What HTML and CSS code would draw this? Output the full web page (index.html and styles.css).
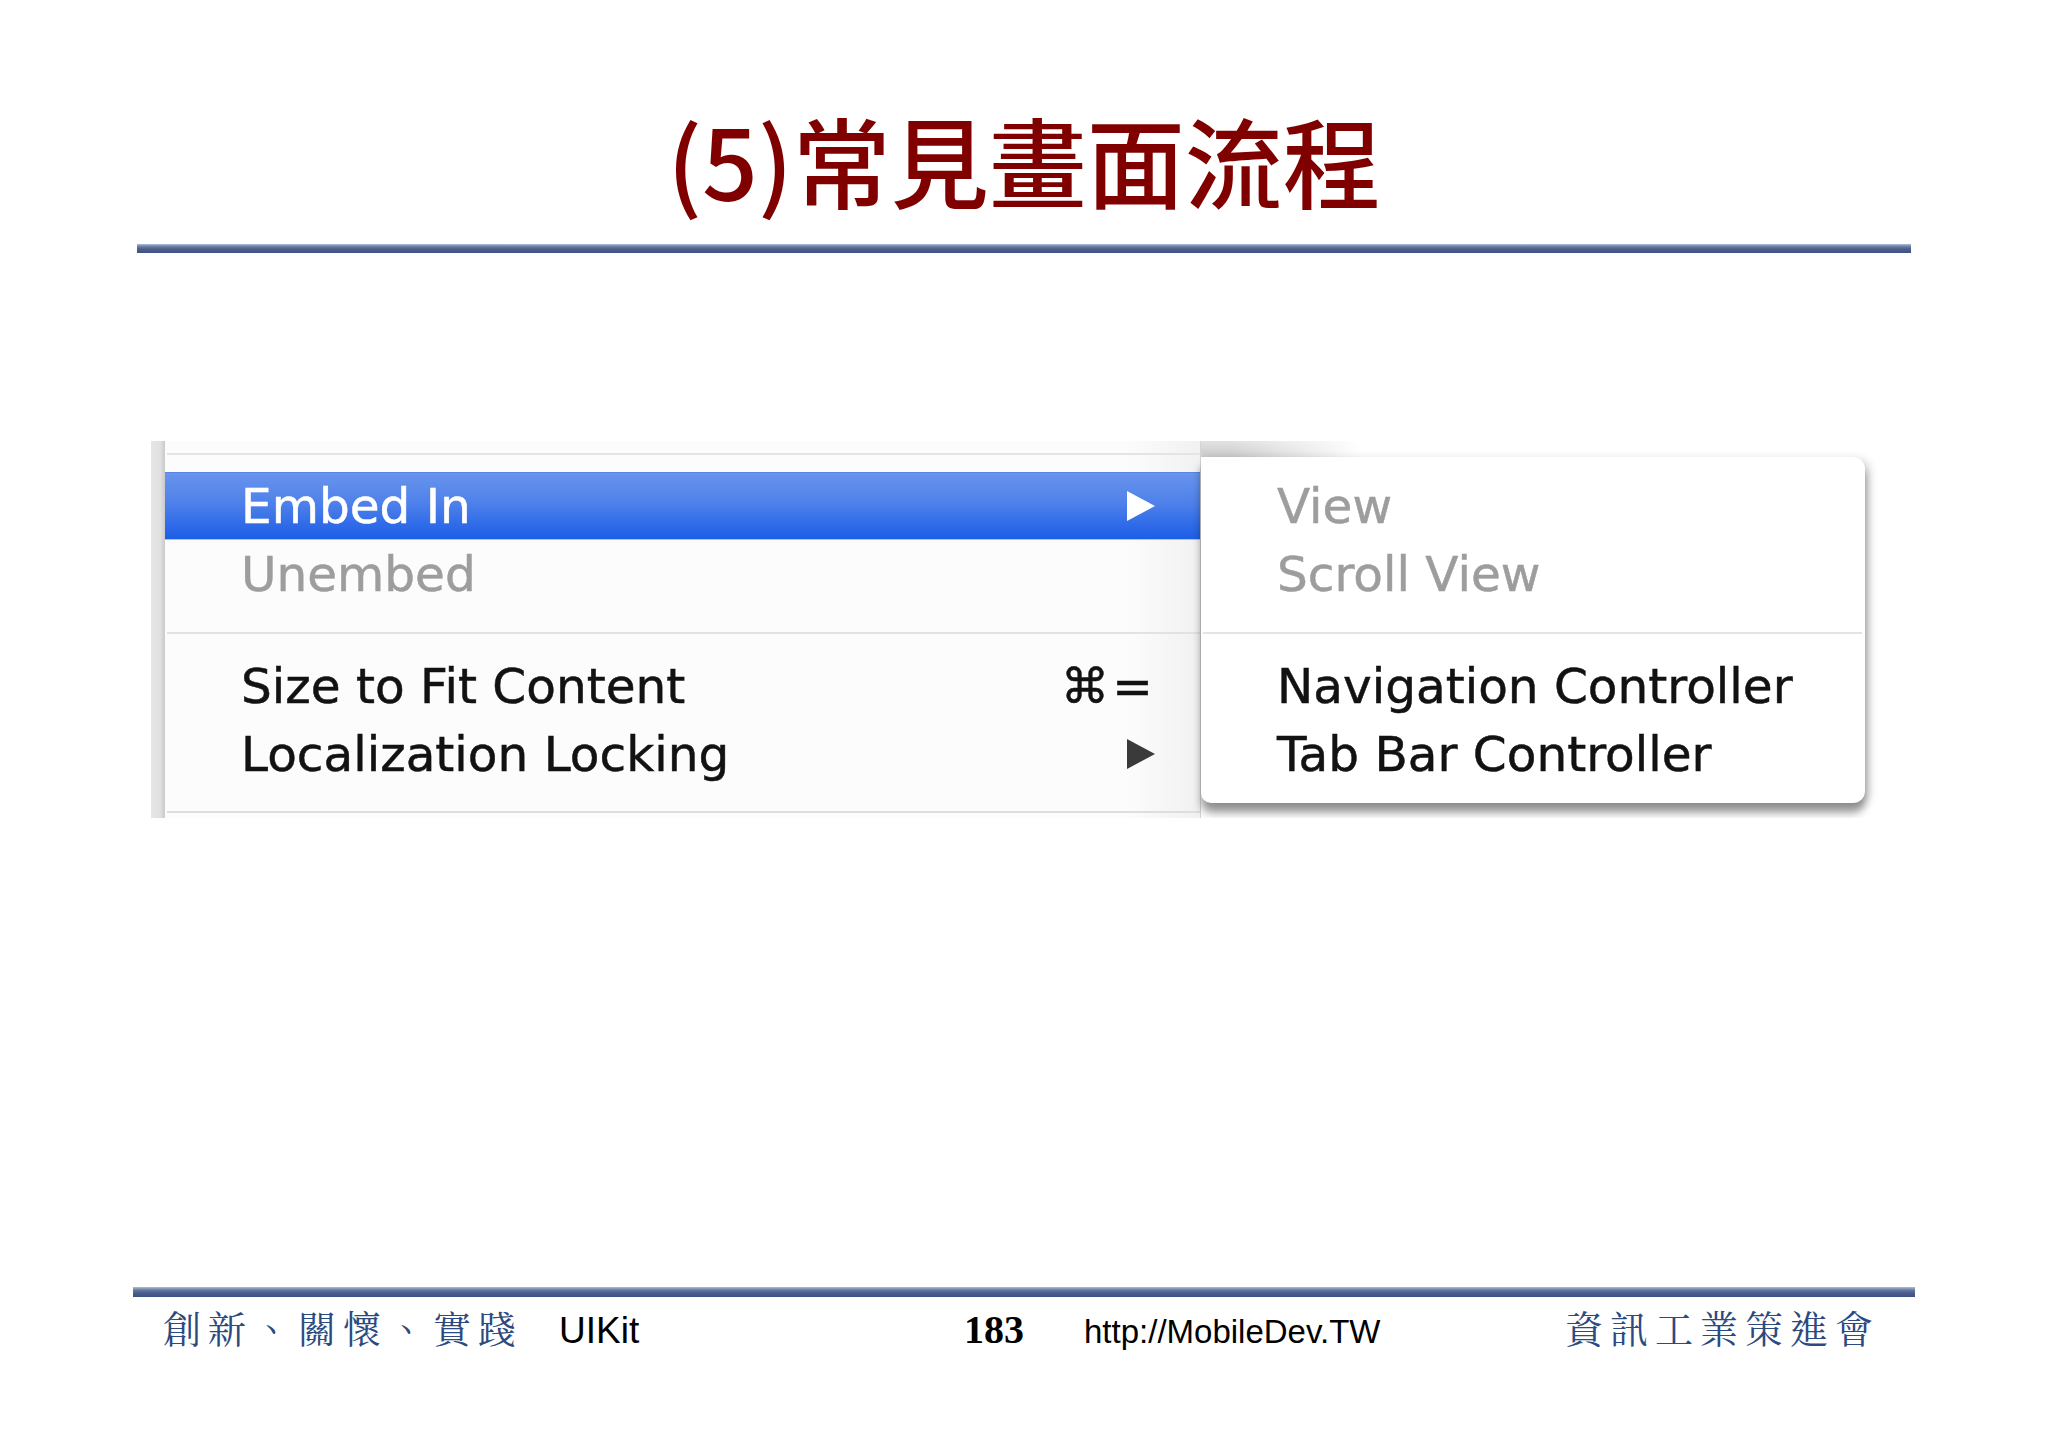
FILE: index.html
```html
<!DOCTYPE html>
<html lang="zh-Hant">
<head>
<meta charset="utf-8">
<title>(5)常見畫面流程</title>
<link rel="stylesheet" href="styles.css">
</head>
<body>
<div class="slide">
  <header class="title-area">
    <h1 class="title">(5)常見畫面流程</h1>
  </header>
  <div class="rule rule-top"></div>

  <div class="shot">
    <div class="shot-edge"></div>
    <div class="menu">
      <div class="menu-line"></div>
      <div class="menu-items">
        <div class="item item-selected">
          <span class="label">Embed In</span>
          <svg class="arrow" width="30" height="32" viewBox="0 0 30 32"><polygon points="1,1 29,16 1,31" fill="#ffffff"/></svg>
        </div>
        <div class="item item-disabled"><span class="label">Unembed</span></div>
        <div class="sep"><div class="sep-line"></div></div>
        <div class="item">
          <span class="label">Size to Fit Content</span>
          <span class="shortcut">⌘=</span>
        </div>
        <div class="item">
          <span class="label">Localization Locking</span>
          <svg class="arrow" width="30" height="32" viewBox="0 0 30 32"><polygon points="1,1 29,16 1,31" fill="#3a3a3a"/></svg>
        </div>
      </div>
      <div class="menu-line menu-line-bottom"></div>
    </div>
    <div class="subcol">
      <div class="subcol-top"></div>
      <div class="submenu">
        <div class="item sub-item item-disabled"><span class="label">View</span></div>
        <div class="item sub-item item-disabled"><span class="label">Scroll View</span></div>
        <div class="sep sub-sep"><div class="sep-line"></div></div>
        <div class="item sub-item"><span class="label">Navigation Controller</span></div>
        <div class="item sub-item"><span class="label">Tab Bar Controller</span></div>
      </div>
    </div>
  </div>

  <div class="rule rule-bottom"></div>
  <footer class="footer">
    <span class="motto">創新、關懷、實踐</span>
    <span class="topic">UIKit</span>
    <span class="page">183</span>
    <span class="url">http://MobileDev.TW</span>
    <span class="org">資訊工業策進會</span>
  </footer>
</div>
</body>
</html>
```

FILE: styles.css
```css
* { box-sizing: border-box; }
html, body { margin: 0; padding: 0; background: #ffffff; }
body {
  width: 2048px;
  height: 1447px;
  overflow: hidden;
  font-family: "Liberation Sans", Arial, sans-serif;
}
.slide {
  width: 2048px;
  height: 1447px;
  display: flex;
  flex-direction: column;
}

/* Title */
.title-area {
  height: 244px;
  padding-top: 98px;
  text-align: center;
}
.title {
  margin: 0;
  font-family: "Noto Sans CJK TC", "Noto Sans CJK SC", sans-serif;
  font-weight: 500;
  font-size: 98px;
  line-height: 120px;
  color: #800000;
}

/* Rules */
.rule {
  background: linear-gradient(#b3bfd8 0%, #66799f 30%, #4a5d8c 60%, #3e5184 100%);
}
.rule-top {
  margin-left: 137px;
  width: 1774px;
  height: 9px;
}
.rule-bottom {
  margin-top: 469px;
  margin-left: 133px;
  width: 1782px;
  height: 10px;
}

/* Screenshot of the menu */
.shot {
  margin-top: 188px;
  margin-left: 151px;
  width: 1727px;
  height: 377px;
  display: flex;
  overflow: hidden;
  background: #fcfcfc;
}
.shot-edge {
  width: 14px;
  flex: none;
  background: linear-gradient(to right, #e6e6e6 0%, #e1e1e1 65%, #cacaca 100%);
}
.menu {
  width: 1035px;
  flex: none;
  padding-top: 12px;
  background: linear-gradient(to right, #fcfcfc 0, #fcfcfc 93%, #f1f1f1 100%);
}
.menu-line {
  height: 2px;
  margin-left: 2px;
  background: #e4e4e4;
}
.menu-line-bottom {
  margin-top: 23px;
  background: #dedede;
}
.menu-items {
  margin-top: 17px;
}
.item {
  height: 68px;
  display: flex;
  align-items: center;
  padding-left: 76px;
  padding-right: 44px;
  font-family: "DejaVu Sans", "Liberation Sans", sans-serif;
  font-size: 48.5px;
  line-height: 68px;
  white-space: nowrap;
  color: #121212;
  -webkit-text-stroke: 0.5px currentColor;
}
.item .label { flex: 1; }
.item-selected {
  color: #ffffff;
  background: linear-gradient(#6894ec 0%, #4f81ea 45%, #2e6ae8 80%, #1c5ee6 100%);
  border-top: 1px solid #5886e4;
  border-bottom: 1px solid #a9c2ef;
}
.item-disabled { color: #9d9d9d; }
.arrow { flex: none; display: block; }
.shortcut {
  flex: none;
  letter-spacing: 3px;
}
.sep {
  height: 44px;
  padding-top: 24px;
}
.sep-line {
  height: 2px;
  margin-left: 2px;
  background: #e2e2e2;
}

/* Submenu */
.subcol {
  flex: 1;
  display: flex;
  flex-direction: column;
  border-left: 1px solid #d4d4d4;
  background: #ffffff;
}
.subcol-top {
  height: 16px;
  flex: none;
  background:
    linear-gradient(to right, rgba(255,255,255,0) 0px, rgba(255,255,255,0) 30px, #ffffff 160px),
    linear-gradient(#e2e2e2, #c9c9c9);
}
.submenu {
  width: 664px;
  height: 346px;
  flex: none;
  padding-top: 15px;
  background: #ffffff;
  border-radius: 0 12px 12px 10px;
  box-shadow: 0 10px 8px rgba(0,0,0,0.38), 5px 2px 8px rgba(0,0,0,0.16);
}
.sub-item {
  padding-left: 76px;
  padding-right: 30px;
}
.sub-sep .sep-line {
  margin-left: 2px;
  margin-right: 3px;
  background: #e4e4e4;
}

/* Footer */
.footer {
  margin-top: 2px;
  padding-left: 163px;
  display: grid;
  grid-template-columns: 396px 405px 120px 481px auto;
  align-items: baseline;
  white-space: nowrap;
}
.motto, .org {
  font-family: "Noto Serif CJK TC", "Noto Sans CJK TC", serif;
  font-size: 38px;
  letter-spacing: 7px;
  color: #2b4a80;
}
.topic, .url {
  font-family: "Liberation Sans", Arial, sans-serif;
  font-size: 33px;
  color: #000000;
}
.topic { font-size: 37px; }
.page {
  font-family: "Liberation Serif", "Times New Roman", serif;
  font-weight: bold;
  font-size: 40px;
  color: #000000;
}
```
